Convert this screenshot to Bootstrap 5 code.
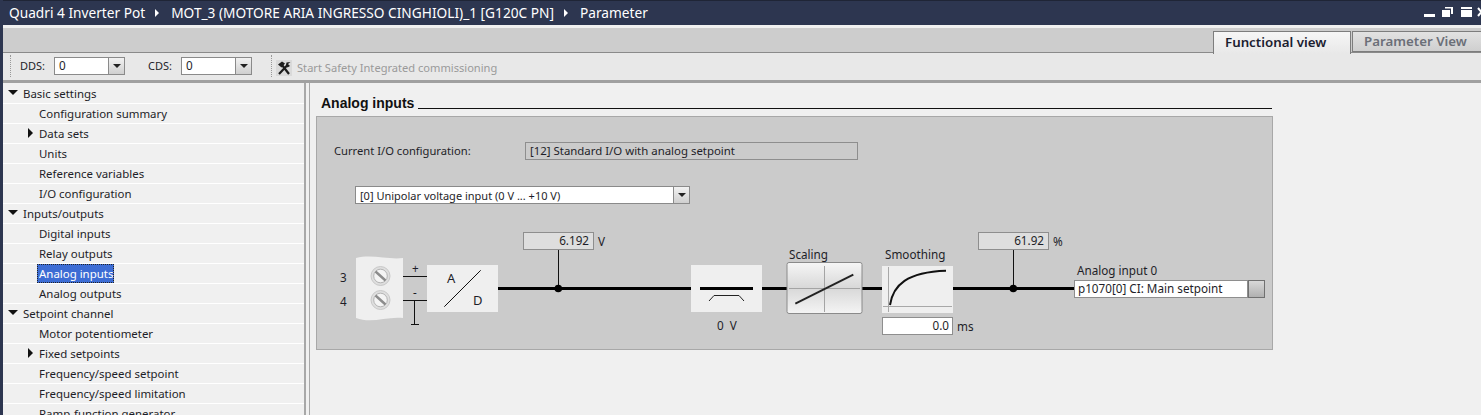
<!DOCTYPE html>
<html lang="en">
<head>
<meta charset="utf-8">
<title>Parameter</title>
<link href="https://cdn.jsdelivr.net/npm/bootstrap@5.3.0/dist/css/bootstrap.min.css" rel="stylesheet">
<script src="https://cdn.jsdelivr.net/npm/bootstrap@5.3.0/dist/js/bootstrap.bundle.min.js"></script>
<style>
html,body{height:415px;overflow:hidden;background:#f0f0f0;}
body{font-family:"Noto Sans","Open Sans",sans-serif;font-size:11.45px;color:#1e1e28;line-height:1;}
.app-shell{width:1481px;height:415px;border-left:3px solid #2d3650;overflow:hidden;}
.title-bar{height:25px;margin-left:-3px;background:#2d3650;border-top:1px solid #1f2536;color:#fff;font-size:13.7px;padding-left:9px;white-space:nowrap;position:relative;}
.crumb-tri{width:0;height:0;border-left:4px solid #fff;border-top:4px solid transparent;border-bottom:4px solid transparent;margin:0 12px 0 10px;}
.win-icons{position:absolute;right:0;top:-1px;}
.tab-strip{height:28px;background:#cdcdcd;padding-top:3px;border-top:3px solid #f0f0f0;}
.view-tab{font-weight:600;font-size:13.3px;padding-left:11px;border:1px solid #7d7d7d;display:flex;align-items:center;}
.view-tab.on-tab{width:138px;height:23px;background:linear-gradient(#f6f6f6,#e8e8e8);border-bottom:0;color:#1b2030;position:relative;}
.view-tab.off-tab{width:131px;height:21px;margin:0 -2px 0 1px;background:linear-gradient(#e2e2e2,#cfcfcf);color:#6b6f78;}
.tool-row{height:31px;background:#e8e8e8;border-bottom:3px solid #a0a0a0;border-top:1px solid #8a8a8a;margin-top:-1px;padding:0 0 2px 7px;font-size:11px;}
.grip{width:0;height:22px;border-left:1px dotted #999;}
.combo-box{height:18px;background:#fff;border:1px solid #8a8a8a;display:flex;align-items:center;padding-left:4px;font-size:11.7px;}
.tool-combo{width:71px;margin-left:9px;}
.combo-btn{margin-left:auto;width:16px;align-self:stretch;background:linear-gradient(#f2f2f2,#cfcfcf);border-left:1px solid #8a8a8a;display:flex;align-items:center;justify-content:center;}
.combo-btn::after{content:"";border-style:solid;border-color:#222 transparent transparent;border-width:4px 4px 0;}
.tb-dds{margin-left:9px;}
.tb-cds{margin-left:23px;}
.tb-grip2{margin-left:19px;}
.tb-icon{margin:5px 0 0 4px;}
.tb-start{margin:5px 0 0 5px;color:#9a9a9a;font-size:11.1px;}
.main-row{height:332px;}
.side-tree{width:301px;flex:none;background:#f0f0f0;overflow:hidden;padding-top:1px;}
.tree-row{height:20px;border-bottom:1px solid #fff;display:flex;align-items:center;padding-left:36px;white-space:nowrap;position:relative;}
.tree-row.top-row{padding-left:20px;}
.tree-label.sel-item{background:#3c6cd4;color:#fff;outline:1px dotted #222;outline-offset:-1px;padding:4px 1px 4px 2px;margin-left:-2px;}
.caret-d{position:absolute;left:5px;top:6px;border-style:solid;border-color:#111 transparent transparent;border-width:5px 5px 0;}
.caret-r{position:absolute;left:25px;top:4px;border-style:solid;border-color:transparent transparent transparent #111;border-width:5px 0 5px 5px;}
.split-bar{width:6px;flex:none;background:#f0f0f0;border-left:2px solid #a8a8a8;border-right:1px solid #a8a8a8;}
.work-pane{flex:1;background:#f0f0f0;padding:13px 0 0 6px;}
.sect-head{width:951px;font-family:"Liberation Sans",Arial,sans-serif;font-size:14px;font-weight:700;color:#111;margin-left:5px;height:14px;}
.sect-rule{flex:1;border-bottom:1px solid #111;margin-left:4px;height:13px;}
.diagram-panel{position:relative;width:957px;height:234px;background:#cbcbcb;border:1px solid #a8a8a8;margin-top:6px;font-size:11.7px;}
.diagram-panel svg{position:absolute;left:0;top:0;}
.dg-text{position:absolute;white-space:nowrap;line-height:14px;}
.dg-box{position:absolute;display:flex;align-items:center;white-space:nowrap;}
.ro-field{background:#dedede;border:1px solid #8e8e8e;justify-content:flex-end;padding-right:4px;}
.cfg-field{background:#cbcbcb;border:1px solid #8e8e8e;padding-left:4px;}
.wt-field{background:#fff;border:1px solid #8e8e8e;}
.t-cur{left:17px;top:27px;font-size:11.2px;}
.b-cur{left:208px;top:25px;width:333px;height:18px;font-size:11.42px;}
.b-uni{left:38px;top:69px;width:335px;height:18px;font-size:11px;}
.t-3{left:23px;top:153px;}
.t-4{left:23px;top:177px;}
.t-plus{left:95px;top:144px;}
.t-minus{left:96px;top:168px;}
.t-a{left:130px;top:154px;font-size:13px;}
.t-d{left:156px;top:176px;font-size:13px;}
.b-v1{left:206px;top:115px;width:71px;height:18px;}
.t-v1{left:281px;top:117px;}
.t-0v{left:400px;top:201px;}
.t-sc{left:472px;top:130px;}
.t-sm{left:568px;top:130px;}
.b-ms{left:565px;top:200px;width:71px;height:18px;padding-right:3px;justify-content:flex-end;}
.t-ms{left:640px;top:202px;}
.b-v2{left:661px;top:115px;width:71px;height:18px;}
.t-pc{left:736px;top:117px;}
.t-ai{left:760px;top:146px;}
.b-ai{left:757px;top:163px;width:174px;height:18px;padding-left:3px;}
.b-btn{left:931px;top:163px;width:17px;height:18px;background:linear-gradient(#d8d8d8,#b0b0b0);border-color:#707070;}
</style>
</head>
<body>
<div class="app-shell d-flex flex-column">
  <div class="title-bar d-flex align-items-center flex-shrink-0">
    <span>Quadri 4 Inverter Pot</span><span class="crumb-tri"></span><span>MOT_3 (MOTORE ARIA INGRESSO CINGHIOLI)_1 [G120C PN]</span><span class="crumb-tri"></span><span>Parameter</span>
    <svg class="win-icons" width="60" height="25" viewBox="1421 0 60 25" fill="#fff">
      <rect x="1424" y="14" width="11" height="3"/>
      <rect x="1442" y="10" width="8" height="7"/>
      <path d="M1445 8.500V7H1453V14H1451V8.500Z"/>
      <rect x="1461" y="7" width="11" height="2"/><rect x="1461" y="10" width="11" height="7"/>
      <path d="M1478 8L1485 16M1485 8L1478 16" stroke="#fff" stroke-width="2" fill="none"/>
    </svg>
  </div>
  <div class="tab-strip d-flex justify-content-end align-items-start flex-shrink-0">
    <div class="view-tab on-tab">Functional view</div>
    <div class="view-tab off-tab">Parameter View</div>
  </div>
  <div class="tool-row d-flex align-items-center flex-shrink-0">
    <div class="grip"></div>
    <span class="tb-dds">DDS:</span>
    <div class="combo-box tool-combo">0<span class="combo-btn"></span></div>
    <span class="tb-cds">CDS:</span>
    <div class="combo-box tool-combo">0<span class="combo-btn"></span></div>
    <div class="grip tb-grip2"></div>
    <svg class="tb-icon" width="16" height="16" viewBox="0 0 16 16"><rect width="16" height="16" fill="#dadada"/><path d="M3 14L11.500 5M6 5L13 14" stroke="#1c1c1c" stroke-width="2.200" fill="none"/><path d="M2 4.500L6 1.500L9 3.500L5.500 7.500Z" fill="#1c1c1c"/><path d="M10 5L10.500 2.500L14.500 2L12 4L14 6L11.500 7.500Z" fill="#1c1c1c"/></svg>
    <span class="tb-start">Start Safety Integrated commissioning</span>
  </div>
  <div class="main-row d-flex">
    <div class="side-tree">
      <div class="tree-row top-row"><i class="caret-d"></i>Basic settings</div>
      <div class="tree-row">Configuration summary</div>
      <div class="tree-row"><i class="caret-r"></i>Data sets</div>
      <div class="tree-row">Units</div>
      <div class="tree-row">Reference variables</div>
      <div class="tree-row">I/O configuration</div>
      <div class="tree-row top-row"><i class="caret-d"></i>Inputs/outputs</div>
      <div class="tree-row">Digital inputs</div>
      <div class="tree-row">Relay outputs</div>
      <div class="tree-row"><span class="tree-label sel-item">Analog inputs</span></div>
      <div class="tree-row">Analog outputs</div>
      <div class="tree-row top-row"><i class="caret-d"></i>Setpoint channel</div>
      <div class="tree-row">Motor potentiometer</div>
      <div class="tree-row"><i class="caret-r"></i>Fixed setpoints</div>
      <div class="tree-row">Frequency/speed setpoint</div>
      <div class="tree-row">Frequency/speed limitation</div>
      <div class="tree-row">Ramp-function generator</div>
    </div>
    <div class="split-bar"></div>
    <div class="work-pane">
      <div class="sect-head d-flex"><span>Analog inputs</span><span class="sect-rule"></span></div>
      <div class="diagram-panel">
        <svg width="955" height="232" viewBox="0 0 955 232">
          <defs>
            <linearGradient id="scaleFill" x1="0" y1="0" x2="0" y2="1"><stop offset="0" stop-color="#f6f6f6"/><stop offset=".5" stop-color="#d8d8d8"/><stop offset="1" stop-color="#f4f4f4"/></linearGradient>
          </defs>
          <path d="M39 141C55 137 72 143 86 141V201C70 199 55 207 39 201Z" fill="#efefef"/>
          <g fill="#dedede" stroke="#c8c8c8"><circle cx="63.500" cy="159" r="9.500"/><circle cx="63.500" cy="183" r="9.500"/></g>
          <g fill="#f4f4f4" stroke="#b4b4b4"><circle cx="63.500" cy="159" r="6.800"/><circle cx="63.500" cy="183" r="6.800"/></g>
          <path d="M58.500 154.500L68.500 163.500M58.500 178.500L68.500 187.500" stroke="#8c8c8c" stroke-width="2.400"/>
          <path d="M86 159.500H110M86 183.500H110M97.500 183.500V207M94 207.500H102" stroke="#111" fill="none"/>
          <rect x="110" y="148" width="71" height="47" fill="#efefef"/>
          <path d="M127.300 189.700L163.700 153.300" stroke="#111"/>
          <path d="M181 171.500H374M445 171.500H470M545 171.500H565M636 171.500H757" stroke="#000" stroke-width="3" fill="none"/>
          <path d="M241.500 133V171M696.500 133V171" stroke="#111"/>
          <circle cx="241.300" cy="171.500" r="3.800" fill="#000"/><circle cx="696.300" cy="171.500" r="3.800" fill="#000"/>
          <rect x="374" y="148" width="71" height="47" fill="#efefef"/>
          <path d="M383 171.500H436" stroke="#000" stroke-width="3"/>
          <path d="M392 184L397 178.500H422L427 184" stroke="#222" fill="none"/>
          <rect x="470" y="145.500" width="75" height="51" rx="2" fill="url(#scaleFill)" stroke="#8a8a8a"/>
          <path d="M472 171.500H543M507.500 149V195" stroke="#a4a4a4"/>
          <path d="M478.300 186.700L536.300 157.700" stroke="#222" stroke-width="2"/>
          <rect x="565" y="149" width="71" height="47" fill="#efefef"/>
          <path d="M566 189.500H635M571.500 150V195" stroke="#a8a8a8"/>
          <path d="M573 188C576 168 590 155 629 153.700" stroke="#111" stroke-width="2" fill="none"/>
        </svg>
        <span class="dg-text t-cur">Current I/O configuration:</span>
        <div class="dg-box cfg-field b-cur">[12] Standard I/O with analog setpoint</div>
        <div class="combo-box dg-box b-uni">[0] Unipolar voltage input (0 V ... +10 V)<span class="combo-btn"></span></div>
        <span class="dg-text t-3">3</span>
        <span class="dg-text t-4">4</span>
        <span class="dg-text t-plus">+</span>
        <span class="dg-text t-minus">-</span>
        <span class="dg-text t-a">A</span>
        <span class="dg-text t-d">D</span>
        <div class="dg-box ro-field b-v1">6.192</div>
        <span class="dg-text t-v1">V</span>
        <span class="dg-text t-0v">0&nbsp; V</span>
        <span class="dg-text t-sc">Scaling</span>
        <span class="dg-text t-sm">Smoothing</span>
        <div class="dg-box wt-field b-ms">0.0</div>
        <span class="dg-text t-ms">ms</span>
        <div class="dg-box ro-field b-v2">61.92</div>
        <span class="dg-text t-pc">%</span>
        <span class="dg-text t-ai">Analog input 0</span>
        <div class="dg-box wt-field b-ai">p1070[0] CI: Main setpoint</div>
        <div class="dg-box ro-field b-btn"></div>
      </div>
    </div>
  </div>
</div>
</body>
</html>
